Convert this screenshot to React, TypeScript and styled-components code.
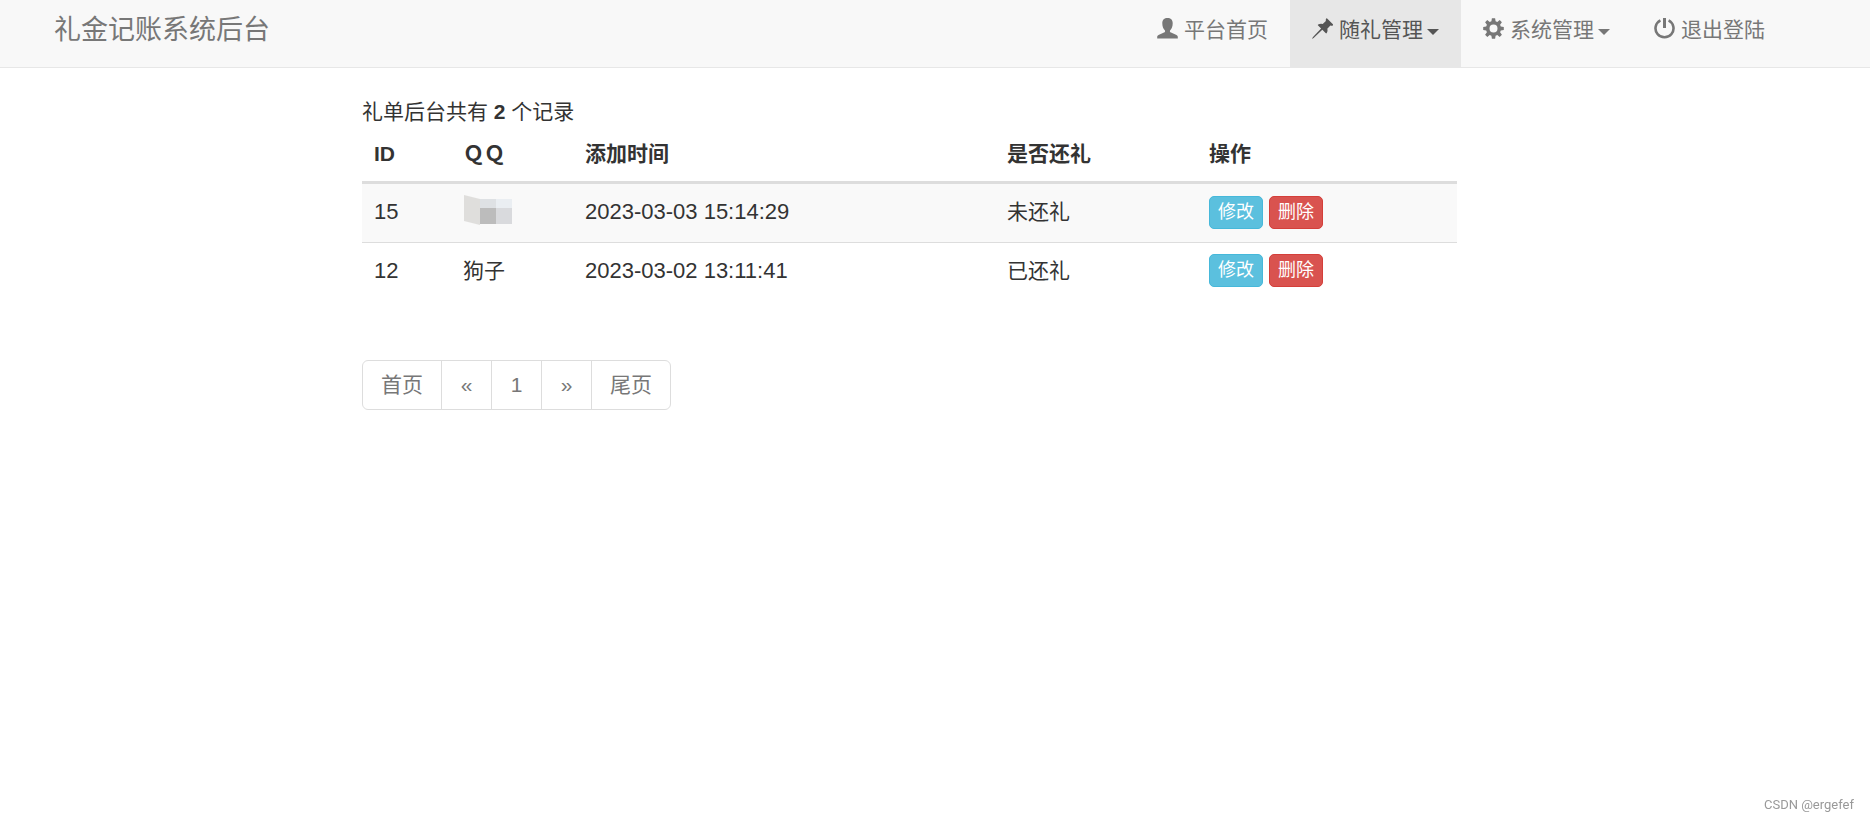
import React from "react";
import styled, { createGlobalStyle } from "styled-components";

const GlobalStyle = createGlobalStyle`
  * {
    box-sizing: border-box;
  }
  body {
    margin: 0;
    background: #fff;
    color: #333;
    font-family: "Liberation Sans", "Noto Sans CJK SC", sans-serif;
    font-size: 21px;
    line-height: 30px;
  }
`;

const Navbar = styled.header`
  display: flex;
  justify-content: space-between;
  height: 68px;
  padding: 0 83px 0 54px;
  background: #f8f8f8;
  border-bottom: 1px solid #e7e7e7;
`;

const Brand = styled.a`
  padding-top: 15px;
  color: #777;
  font-size: 27px;
  text-decoration: none;
  white-space: nowrap;
`;

const NavList = styled.nav`
  display: flex;
`;

const NavLink = styled.a<{ $active?: boolean }>`
  display: flex;
  align-items: center;
  padding: 0 22px 8px;
  background: ${(p) => (p.$active ? "#e7e7e7" : "transparent")};
  color: ${(p) => (p.$active ? "#555" : "#777")};
  text-decoration: none;
  white-space: nowrap;
`;

const Icon = styled.svg`
  width: 21px;
  height: 21px;
  margin: 0 6px 3px 0;
  flex: none;
  fill: currentColor;
`;

const Caret = styled.span`
  margin: 4px 0 0 4px;
  border-top: 6px solid currentColor;
  border-left: 6px solid transparent;
  border-right: 6px solid transparent;
`;

const Page = styled.main`
  display: grid;
  grid-template-columns: 362fr minmax(0, 1095fr) 413fr;
  padding-top: 29px;
`;

const Content = styled.div`
  grid-column: 2;
`;

const Summary = styled.p`
  margin: 0;
`;

const RecordTable = styled.table`
  width: 100%;
  table-layout: fixed;
  border-collapse: separate;
  border-spacing: 0;
`;

const HeadCell = styled.th<{ $width: number }>`
  width: ${(p) => p.$width}px;
  padding: 12px;
  border-bottom: 3px solid #ddd;
  text-align: left;
  font-weight: 700;
`;

const Row = styled.tr`
  &:nth-child(odd) td {
    background: #f9f9f9;
  }
  & + & td {
    border-top: 1px solid #ddd;
  }
`;

const Cell = styled.td<{ $numeric?: boolean }>`
  height: 58px;
  padding: 0 12px 2px;
  font-size: ${(p) => (p.$numeric ? 22 : 21)}px;
  white-space: nowrap;
`;

const Mosaic = styled.svg`
  display: block;
  width: 49px;
  height: 30px;
  margin: 0 0 4px 1px;
`;

const Actions = styled.div`
  display: flex;
  gap: 6px;
`;

const ActionButton = styled.button<{ $danger?: boolean }>`
  height: 33px;
  padding: 0 8px;
  border: 1px solid ${(p) => (p.$danger ? "#d43f3a" : "#46b8da")};
  border-radius: 5px;
  background: ${(p) => (p.$danger ? "#d9534f" : "#5bc0de")};
  color: #fff;
  font-family: inherit;
  font-size: 18px;
  line-height: 27px;
`;

const Pagination = styled.nav`
  display: flex;
  width: fit-content;
  margin-top: 60px;
  border: 1px solid #ddd;
  border-radius: 6px;
`;

const PageLink = styled.a`
  min-width: 50px;
  padding: 9px 18px;
  color: #777;
  text-align: center;
  text-decoration: none;
  & + & {
    border-left: 1px solid #ddd;
  }
`;

const Watermark = styled.footer`
  position: fixed;
  right: 16px;
  bottom: 8px;
  color: #999;
  font-family: Roboto, sans-serif;
  font-size: 13px;
  line-height: 16px;
`;

const UserIcon = () => (
  <Icon viewBox="0 0 21 21" aria-hidden="true">
    <path d="M10.500 0C7.300 0 5.300 1.900 5.300 5.200C5.300 8.400 6.300 10.800 7.800 12.200C8.400 13.400 8 14 7 14.500L2 16.800C.7 17.400.2 18 .2 19.200V20.500H20.800V19.200C20.800 18 20.300 17.400 19 16.800L14 14.500C13 14 12.600 13.400 13.200 12.200C14.700 10.800 15.700 8.400 15.700 5.200C15.700 1.900 13.700 0 10.500 0Z" />
  </Icon>
);

const PinIcon = () => (
  <Icon viewBox="0 0 21 21" aria-hidden="true">
    <path d="M14.200.6Q14.800.1 15.400.7L20.900 6.200Q21.400 6.900 20.800 7.400Q19.700 8 18.400 7.600L15.300 10.700Q16 13 14.700 15.100Q14.200 15.700 13.600 15.100L10.300 11.800L1.600 20.100L0 20.900L.8 19.300L9.100 10.600L6.100 7.600Q5.500 7 6.200 6.500Q8.400 5.300 10.700 6L13.900 2.900Q13.500 1.600 14.200.6Z" />
  </Icon>
);

const CogIcon = () => (
  <Icon viewBox="0 0 21 21" aria-hidden="true">
    <path
      fillRule="evenodd"
      d="M8.900.2H12.100L12.600 3.200L14.300 3.900L16.700 2.100L18.900 4.300L17.100 6.700L17.800 8.400L20.800 8.900V12.100L17.800 12.600L17.100 14.300L18.900 16.700L16.700 18.900L14.300 17.100L12.600 17.800L12.100 20.800H8.900L8.400 17.800L6.700 17.100L4.300 18.900L2.100 16.700L3.900 14.300L3.200 12.600L.2 12.100V8.900L3.200 8.400L3.900 6.700L2.100 4.300L4.300 2.100L6.700 3.900L8.400 3.200ZM10.500 6.500A4 4 0 1 0 10.500 14.500A4 4 0 1 0 10.500 6.500Z"
    />
  </Icon>
);

const PowerIcon = () => (
  <Icon viewBox="0 0 21 21" aria-hidden="true">
    <path d="M9 0H12V10H9Z" />
    <path
      d="M6.400 2.300A9 9 0 1 0 14.600 2.300"
      fill="none"
      stroke="currentColor"
      strokeWidth="2.600"
    />
  </Icon>
);

const columns = [
  { title: "ID", width: 89 },
  { title: "ＱＱ", width: 122 },
  { title: "添加时间", width: 422 },
  { title: "是否还礼", width: 202 },
  { title: "操作", width: 260 },
];

const records = [
  { id: 15, name: null, time: "2023-03-03 15:14:29", status: "未还礼" },
  { id: 12, name: "狗子", time: "2023-03-02 13:11:41", status: "已还礼" },
];

const pages = ["首页", "«", "1", "»", "尾页"];

export default function App() {
  return (
    <>
      <GlobalStyle />
      <Navbar>
        <Brand href="#">礼金记账系统后台</Brand>
        <NavList>
          <NavLink href="#"><UserIcon />平台首页</NavLink>
          <NavLink href="#" $active><PinIcon />随礼管理<Caret /></NavLink>
          <NavLink href="#"><CogIcon />系统管理<Caret /></NavLink>
          <NavLink href="#"><PowerIcon />退出登陆</NavLink>
        </NavList>
      </Navbar>
      <Page>
        <Content>
          <Summary>礼单后台共有 <b>2</b> 个记录</Summary>
          <RecordTable>
            <thead>
              <tr>
                {columns.map((c) => (
                  <HeadCell key={c.title} $width={c.width}>{c.title}</HeadCell>
                ))}
              </tr>
            </thead>
            <tbody>
              {records.map((r) => (
                <Row key={r.id}>
                  <Cell $numeric>{r.id}</Cell>
                  <Cell>
                    {r.name ?? (
                      <Mosaic viewBox="0 0 49 30" aria-hidden="true">
                        <path d="M0 0L16 4V30L0 26Z" fill="#dfdedc" />
                        <path d="M16 4H32V13H16Z" fill="#dee1e4" />
                        <path d="M32 4H48V13H32Z" fill="#eaeef2" />
                        <path d="M16 13H32V29H16Z" fill="#bcbcbc" />
                        <path d="M32 13H48V29H32Z" fill="#d9dadd" />
                      </Mosaic>
                    )}
                  </Cell>
                  <Cell $numeric>{r.time}</Cell>
                  <Cell>{r.status}</Cell>
                  <Cell>
                    <Actions>
                      <ActionButton type="button">修改</ActionButton>
                      <ActionButton type="button" $danger>删除</ActionButton>
                    </Actions>
                  </Cell>
                </Row>
              ))}
            </tbody>
          </RecordTable>
          <Pagination aria-label="分页">
            {pages.map((p) => (
              <PageLink key={p} href="#">{p}</PageLink>
            ))}
          </Pagination>
        </Content>
      </Page>
      <Watermark>CSDN @ergefef</Watermark>
    </>
  );
}
